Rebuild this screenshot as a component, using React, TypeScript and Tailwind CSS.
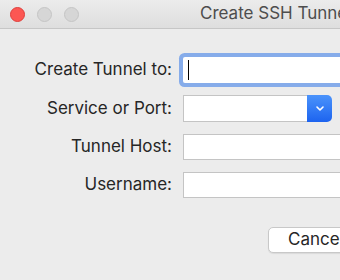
const rows = [
  { label: "Create Tunnel to:", kind: "focus" },
  { label: "Service or Port:", kind: "select" },
  { label: "Tunnel Host:", kind: "text" },
  { label: "Username:", kind: "text" },
];

function Field({ kind }: { kind: string }) {
  if (kind === "focus") {
    return (
      <div className="h-[26px] w-[200px] bg-white rounded-[2px] shadow-[0_0_0_4px_#86acea] flex items-center pl-[5px]">
        <div className="w-[1px] h-[20px] bg-black" />
      </div>
    );
  }
  if (kind === "select") {
    return (
      <div className="flex h-[27px]">
        <div className="w-[124px] bg-white border border-[#c4c4c4] border-r-0" />
        <div className="w-[25px] rounded-r-[5px] bg-gradient-to-b from-[#4b93fb] to-[#1d63ef] flex items-center justify-center">
          <svg width="10" height="7" viewBox="0 0 10 7">
            <path d="M2 2 L5 5 L8 2" fill="none" stroke="white" strokeWidth="1.6" strokeLinecap="round" strokeLinejoin="round" />
          </svg>
        </div>
      </div>
    );
  }
  return <div className="h-[26px] w-[200px] bg-white border border-[#c4c4c4]" />;
}

export default function App() {
  return (
    <div className="w-[340px] h-[280px] overflow-hidden bg-[#ececec] font-['Inter','Liberation_Sans',sans-serif]">
      {/* title bar */}
      <div className="h-[29px] flex items-center pl-[10px] bg-gradient-to-b from-[#ececec] to-[#dedede] border-b border-[#c6c6c6] whitespace-nowrap">
        <div className="shrink-0 w-[15px] h-[15px] rounded-full bg-[#fc5753] border border-[#df3f3b]" />
        <div className="shrink-0 w-[15px] h-[15px] rounded-full bg-[#d6d6d6] border border-[#c5c5c5] ml-[12px]" />
        <div className="shrink-0 w-[15px] h-[15px] rounded-full bg-[#d6d6d6] border border-[#c5c5c5] ml-[12px]" />
        <span className="shrink-0 ml-[121px] text-[17px] text-[#4d4d4d]">Create SSH Tunnel</span>
      </div>

      {/* form */}
      <div className="pt-[28px] flex flex-col gap-[12px]">
        {rows.map((r) => (
          <div key={r.label} className="flex items-center">
            <div className="shrink-0 w-[172px] text-right text-[17px] text-[#262626] whitespace-nowrap">{r.label}</div>
            <div className="shrink-0 ml-[11px]">
              <Field kind={r.kind} />
            </div>
          </div>
        ))}
      </div>

      <div className="shrink-0 mt-[29px] ml-[268px] w-[90px] h-[26px] bg-white border border-[#c8c8c8] rounded-[5px] shadow-[0_1px_1px_rgba(0,0,0,0.08)] flex items-center pl-[19px] text-[17px] text-[#262626] whitespace-nowrap">
        Cancel
      </div>
    </div>
  );
}
